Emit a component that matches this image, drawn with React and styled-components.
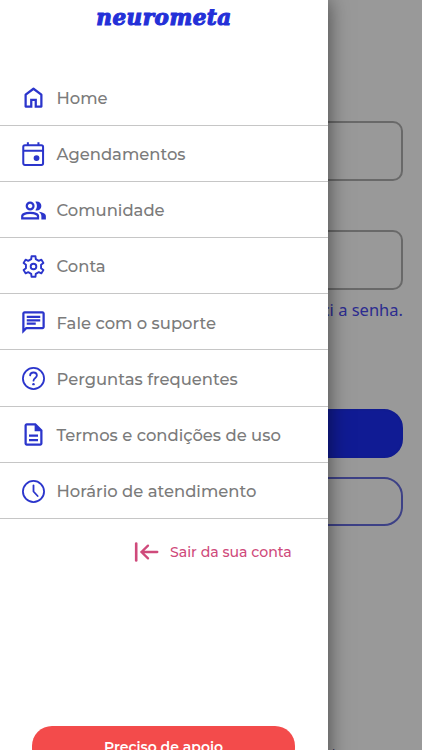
import React from 'react';
import styled, { createGlobalStyle } from 'styled-components';
import { MdOutlineChat, MdOutlineDescription } from 'react-icons/md';

const GlobalStyle = createGlobalStyle`
  * {
    box-sizing: border-box;
  }
  body {
    margin: 0;
    overflow: hidden;
    font-family: 'Montserrat', Inter, sans-serif;
  }
`;

const Screen = styled.div`
  position: relative;
  width: 422px;
  height: 750px;
  overflow: hidden;
  background: #fff;
`;

const LoginPage = styled.div`
  display: flex;
  flex-direction: column;
  height: 100%;
  padding: 121px 19px 0;
`;

const Field = styled.div`
  height: 60px;
  flex: none;
  margin-bottom: 49px;
  border: 2px solid #b0b0b0;
  border-radius: 10px;
`;

const ForgotLink = styled.a`
  margin-top: -41px;
  height: 24px;
  text-align: right;
  font: 16.5px/24px 'Noto Sans', sans-serif;
  color: #4a4af0;
`;

const LoginButton = styled.div`
  flex: none;
  height: 49px;
  margin-top: ${(props) => props.$gap}px;
  border: 2px solid ${(props) => (props.$filled ? '#1b2df0' : '#666de0')};
  border-radius: 19px;
  background: ${(props) => (props.$filled ? '#1b2df7' : 'transparent')};
`;

const SignUp = styled.div`
  flex: none;
  margin-top: 218px;
  padding-right: 57px;
  text-align: right;
  font: 16px/20px 'Noto Sans', sans-serif;
  color: #3c3c90;
`;

const Scrim = styled.div`
  position: absolute;
  inset: 0;
  background: rgba(0, 0, 0, 0.4);
`;

const Drawer = styled.nav`
  position: absolute;
  top: 0;
  left: 0;
  display: flex;
  flex-direction: column;
  width: 328px;
  height: 790px;
  background: #fff;
  box-shadow: 0 0 20px rgba(0, 0, 0, 0.55);
`;

const Logo = styled.div`
  height: 69.5px;
  flex: none;
  padding-top: 4px;
  text-align: center;
  font: italic bold 21.5px/27px 'DejaVu Serif', serif;
  letter-spacing: 0.5px;
  color: #2430d8;
  -webkit-text-stroke: 1.1px #2430d8;
`;

const MenuItem = styled.a`
  display: flex;
  align-items: center;
  flex: none;
  height: 56.2px;
  padding: 1.5px 0 0 19.5px;
  border-bottom: 1px solid #c6c6c6;
  color: #2b35cc;

  svg {
    flex: none;
    width: 27px;
    height: 27px;
  }
`;

const Label = styled.span`
  margin-left: 10px;
  white-space: nowrap;
  font-size: 16.4px;
  font-weight: 500;
  color: #7b7b7b;
`;

const Logout = styled.a`
  display: flex;
  align-items: center;
  margin: 20.5px 0 0 133px;
  height: 24px;
  font-size: 14.1px;
  font-weight: 500;
  color: #cf4a7b;

  svg {
    margin-right: 10px;
  }
`;

const SupportButton = styled.button`
  width: 263px;
  height: 42px;
  flex: none;
  margin: 162px 0 0 32px;
  padding: 0;
  border: 0;
  border-radius: 20px;
  background: #f34b4b;
  color: #fff;
  font: 600 14px 'Montserrat', Inter, sans-serif;
`;

const HomeIcon = () => (
  <svg viewBox="0 0 24 24" fill="currentColor">
    <path d="M6 19h3v-6h6v6h3v-9l-6-4.5L6 10zm-1 2q-1 0-1-1V9.5q0-.3.4-.8L11.4 3.4q.6-.5 1.2 0l7 5.3q.4.5.4.8V20q0 1-1 1h-6v-6h-2v6z" />
  </svg>
);

const CalendarIcon = () => (
  <svg viewBox="0 0 24 24" fill="none" stroke="currentColor" strokeWidth="1.8">
    <rect x="2.9" y="3.7" width="17.6" height="17.6" rx="1.5" />
    <path d="M2.9 8.7h17.6M7 1.2v2.5M16.4 1.2v2.5" />
    <circle cx="14.7" cy="15.2" r="2.6" fill="currentColor" stroke="none" />
  </svg>
);

const CommunityIcon = () => (
  <svg viewBox="0 0 24 24" fill="currentColor">
    <path d="M1 20v-2.8q0-.85.438-1.562T2.6 14.55q1.55-.775 3.15-1.162T9 13t3.25.388t3.15 1.162q.725.375 1.163 1.088T17 17.2V20zm18 0v-3q0-1.1-.612-2.113T16.65 13.15q1.275.15 2.4.513t2.1.887q.9.5 1.375 1.112T23 17v3zM9 12q-1.65 0-2.825-1.175T5 8t1.175-2.825T9 4t2.825 1.175T13 8t-1.175 2.825T9 12m10-4q0 1.65-1.175 2.825T15 12q-.275 0-.7-.062t-.7-.138q.675-.8 1.038-1.775T15 8t-.362-2.025T13.6 4.2q.35-.125.7-.163T15 4q1.65 0 2.825 1.175T19 8M3 18h12v-.8q0-.275-.137-.5t-.363-.35q-1.35-.675-2.725-1.012T9 15t-2.775.338T3.5 16.35q-.225.125-.363.35T3 17.2zm6-8q.825 0 1.413-.587T11 8t-.587-1.412T9 6t-1.412.588T7 8t.588 1.413T9 10" />
  </svg>
);

// six teeth, each one [angle offset, radius]
const tooth = [
  [-17, 6.9],
  [-11, 9.3],
  [11, 9.3],
  [17, 6.9],
];

const gearPoints = [0, 60, 120, 180, 240, 300]
  .flatMap((turn) =>
    tooth.map(([offset, radius]) => {
      const angle = ((turn + offset) * Math.PI) / 180;
      const x = 12 + radius * Math.sin(angle);
      const y = 12 - radius * Math.cos(angle);
      return `${x.toFixed(2)},${y.toFixed(2)}`;
    })
  )
  .join(' ');

const GearIcon = () => (
  <svg
    viewBox="0 0 24 24"
    fill="none"
    stroke="currentColor"
    strokeWidth="1.7"
    strokeLinejoin="round"
  >
    <polygon points={gearPoints} />
    <circle cx="12" cy="12" r="2.5" />
  </svg>
);

const HelpIcon = () => (
  <svg
    viewBox="0 0 24 24"
    fill="none"
    stroke="currentColor"
    strokeWidth="1.6"
    strokeLinecap="round"
  >
    <circle cx="12" cy="12" r="9.4" />
    <path d="M9 9.2c.2-3.4 6-3.4 6 .1 0 2.2-3 2.2-3 4.6" />
    <circle cx="12" cy="17" r="1.1" fill="currentColor" stroke="none" />
  </svg>
);

const ClockIcon = () => (
  <svg
    viewBox="0 0 24 24"
    fill="none"
    stroke="currentColor"
    strokeWidth="1.6"
    strokeLinecap="round"
    strokeLinejoin="round"
  >
    <circle cx="12" cy="12" r="9.4" />
    <path d="M12 6.5V12l3.7 4" />
  </svg>
);

const LogoutIcon = () => (
  <svg
    width="27"
    height="22"
    viewBox="0 0 27 22"
    fill="none"
    stroke="currentColor"
    strokeWidth="2.3"
    strokeLinecap="round"
  >
    <path d="M3.2 2.6v16.8" strokeWidth="2.6" />
    <path d="M24.3 11H8.5M15 4.6 8.5 11l6.5 6.4" />
  </svg>
);

const items = [
  { label: 'Home', icon: <HomeIcon /> },
  { label: 'Agendamentos', icon: <CalendarIcon /> },
  { label: 'Comunidade', icon: <CommunityIcon /> },
  { label: 'Conta', icon: <GearIcon /> },
  { label: 'Fale com o suporte', icon: <MdOutlineChat /> },
  { label: 'Perguntas frequentes', icon: <HelpIcon /> },
  { label: 'Termos e condições de uso', icon: <MdOutlineDescription /> },
  { label: 'Horário de atendimento', icon: <ClockIcon /> },
];

export default function App() {
  return (
    <>
      <GlobalStyle />
      <Screen>
        <LoginPage>
          <Field />
          <Field />
          <ForgotLink>Esqueci a senha.</ForgotLink>
          <LoginButton $gap={87} $filled />
          <LoginButton $gap={19} />
          <SignUp>Crie sua conta</SignUp>
        </LoginPage>
        <Scrim />
        <Drawer>
          <Logo>neurometa</Logo>
          {items.map((item) => (
            <MenuItem key={item.label}>
              {item.icon}
              <Label>{item.label}</Label>
            </MenuItem>
          ))}
          <Logout>
            <LogoutIcon />
            Sair da sua conta
          </Logout>
          <SupportButton>Preciso de apoio</SupportButton>
        </Drawer>
      </Screen>
    </>
  );
}
